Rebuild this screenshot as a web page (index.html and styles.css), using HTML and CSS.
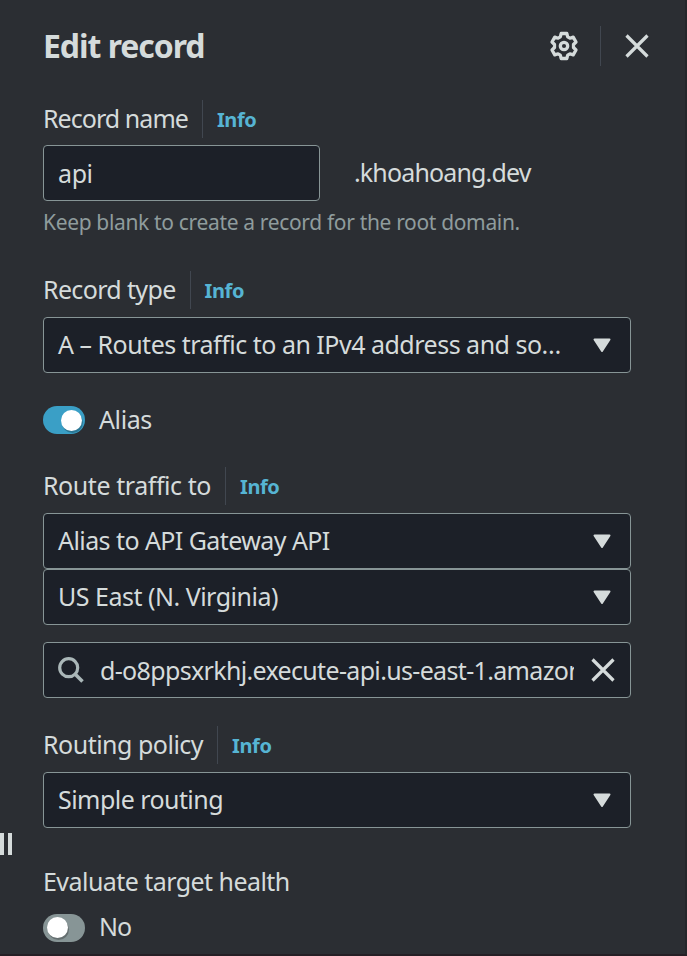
FILE: index.html
```html
<!DOCTYPE html>
<html lang="en">
<head>
<meta charset="utf-8">
<title>Edit record</title>
<link rel="stylesheet" href="styles.css">
</head>
<body>
<aside class="panel">
  <header class="header">
    <h1 class="title">Edit record</h1>
    <button class="icon-button settings" aria-label="Settings">
      <svg width="30" height="30" viewBox="0 0 30 30" fill="none" stroke="currentColor" stroke-width="3.3" stroke-linejoin="round"><path d="M12.2 2.5h5.6l.9 3.4 2.2 1.3 3.3-1.1 2.8 4.9-2.5 2.5v3l2.5 2.5-2.8 4.9-3.3-1.1-2.2 1.3-.9 3.4h-5.6l-.9-3.4-2.2-1.3-3.3 1.1L3 19l2.5-2.5v-3L3 11l2.8-4.9 3.3 1.1 2.2-1.3z"/><circle cx="15" cy="15" r="3.7"/></svg>
    </button>
    <button class="icon-button close" aria-label="Close">
      <svg width="24" height="24" viewBox="0 0 24 24" fill="none" stroke="currentColor" stroke-width="3.2"><path d="M1.5 1.5l21 21M22.5 1.5l-21 21"/></svg>
    </button>
  </header>

  <section class="field name-field">
    <div class="label-row"><label class="label tight">Record name</label><a class="info">Info</a></div>
    <div class="name-row">
      <div class="control name-input"><span class="value">api</span></div>
      <span class="domain">.khoahoang.dev</span>
    </div>
    <p class="hint">Keep blank to create a record for the root domain.</p>
  </section>

  <section class="field type-field">
    <div class="label-row"><label class="label type">Record type</label><a class="info">Info</a></div>
    <div class="control"><span class="value record">A – Routes traffic to an IPv4 address and so…</span><svg class="caret" viewBox="0 0 18 15"><path d="M1.5 1.5h15L9 13z"/></svg></div>
  </section>

  <div class="toggle-row alias-row"><span class="toggle on"></span><span class="toggle-text">Alias</span></div>

  <section class="field">
    <div class="label-row"><label class="label loose">Route traffic to</label><a class="info">Info</a></div>
    <div class="control"><span class="value api">Alias to API Gateway API</span><svg class="caret" viewBox="0 0 18 15"><path d="M1.5 1.5h15L9 13z"/></svg></div>
    <div class="control"><span class="value record">US East (N. Virginia)</span><svg class="caret" viewBox="0 0 18 15"><path d="M1.5 1.5h15L9 13z"/></svg></div>
    <div class="control search">
      <svg class="magnifier" width="26" height="26" viewBox="0 0 26 26" fill="none" stroke="currentColor" stroke-width="3.2"><circle cx="10.7" cy="10.7" r="9"/><path d="M17 17l7.5 7.5" stroke-width="3.6"/></svg>
      <span class="endpoint">d-o8ppsxrkhj.execute-api.us-east-1.amazonaws.com</span>
      <svg class="clear" width="24" height="24" viewBox="0 0 24 24" fill="none" stroke="currentColor" stroke-width="3.2"><path d="M1.5 1.5l21 21M22.5 1.5l-21 21"/></svg>
    </div>
  </section>

  <section class="field policy-field">
    <div class="label-row"><label class="label policy">Routing policy</label><a class="info">Info</a></div>
    <div class="control"><span class="value">Simple routing</span><svg class="caret" viewBox="0 0 18 15"><path d="M1.5 1.5h15L9 13z"/></svg></div>
  </section>

  <section class="health">
    <div class="label">Evaluate target health</div>
    <div class="toggle-row"><span class="toggle"></span><span class="toggle-text no">No</span></div>
  </section>
  <div class="resize-handle"></div>
</aside>
</body>
</html>
```
FILE: styles.css
```css
* { box-sizing: border-box; }

body {
  margin: 0;
  background: #2b2e33;
  color: #d5dbdb;
  font: 450 25px/38px "Noto Sans", sans-serif;
  letter-spacing: -0.55px;
}

.panel {
  position: relative;
  height: 956px;
  padding: 26px 54px 0 43px;
  overflow: hidden;
  border-right: 2px solid #25272b;
  border-bottom: 2px solid #251f25;
}

.header {
  display: flex;
  align-items: center;
  height: 40px;
  margin-right: -22px;
}

.title {
  flex: 1;
  margin: 0;
  font-size: 32px;
  line-height: 40px;
  letter-spacing: -1.05px;
}

.icon-button {
  display: flex;
  align-items: center;
  justify-content: flex-end;
  height: 40px;
  padding: 0;
  border: 0;
  background: none;
  color: #d5dbdb;
}

.settings {
  padding-right: 21px;
  border-right: 1px solid #414750;
}

.close {
  width: 52px;
  padding: 0 4px 1px 0;
}

.field { margin: 0; }
.name-field { padding-top: 34px; }
.type-field { padding-top: 34px; }
.policy-field { padding-top: 28px; }

.label-row {
  display: flex;
  align-items: center;
  height: 38px;
  margin-bottom: 7px;
}

.type-field .label-row,
.policy-field .label-row,
.alias-row + .field .label-row { margin-bottom: 8px; }

.label { white-space: nowrap; }
.label-row .label { padding-bottom: 2px; }
.health .label { margin-top: -1px; }
.tight { letter-spacing: -0.95px; }
.type { letter-spacing: -0.65px; }
.loose { letter-spacing: -0.43px; }
.policy { letter-spacing: -0.5px; }

.info {
  height: 38px;
  margin-left: 14px;
  padding: 1px 0 0 14px;
  border-left: 1px solid #414750;
  color: #56b4d3;
  font-size: 20px;
  font-weight: 700;
  letter-spacing: -0.4px;
}

.control {
  display: flex;
  align-items: center;
  justify-content: space-between;
  height: 56px;
  padding: 0 19px 0 14px;
  border: 1px solid #879596;
  border-radius: 4px;
  background: #1c2028;
  white-space: nowrap;
}

.value { padding-bottom: 2px; }
.value.api { letter-spacing: -0.57px; }
.value.record { letter-spacing: -0.5px; }

.caret {
  width: 18px;
  height: 15px;
  fill: #d5dbdb;
  stroke: #d5dbdb;
  stroke-width: 2;
  stroke-linejoin: round;
}

.name-row { display: flex; align-items: center; }
.name-input { width: 277px; }
.name-input .value { padding: 0; letter-spacing: -0.4px; }
.domain {
  margin-left: 34px;
  padding-bottom: 2px;
  letter-spacing: -0.85px;
}

.hint {
  margin: 6px 0 0;
  color: #8f9c9d;
  font-size: 21px;
  line-height: 30px;
  letter-spacing: -0.34px;
}

.toggle-row {
  display: flex;
  align-items: center;
  height: 38px;
}

.alias-row { margin: 28px 0; }

.toggle {
  width: 42px;
  height: 28px;
  padding: 3px 4px;
  border-radius: 14px;
  background: #879596;
}

.toggle::before {
  content: "";
  display: block;
  width: 21px;
  height: 21px;
  border-radius: 50%;
  background: #fff;
  box-shadow: 1px 2px 0 rgba(0, 0, 0, 0.25);
}

.toggle.on { padding: 4px 0 0 18px; background: #3a9fc6; }
.toggle-text {
  margin-left: 14px;
  padding-bottom: 2px;
  letter-spacing: -0.4px;
}
.toggle-text.no { padding-bottom: 4px; letter-spacing: -1px; }

.search {
  margin-top: 17px;
  padding: 0 15px 0 14px;
}

.magnifier { flex: none; color: #aab7b8; }

.endpoint {
  flex: 1;
  margin: 0 17px 0 16px;
  overflow: hidden;
  letter-spacing: -0.66px;
}

.clear { flex: none; }

.health { padding-top: 35px; }
.health .toggle-row { margin-top: 9px; }

.resize-handle {
  position: absolute;
  top: 833px;
  left: 0;
  width: 12px;
  height: 22px;
  border: solid #d5dbdb;
  border-width: 0 4px;
}
```
